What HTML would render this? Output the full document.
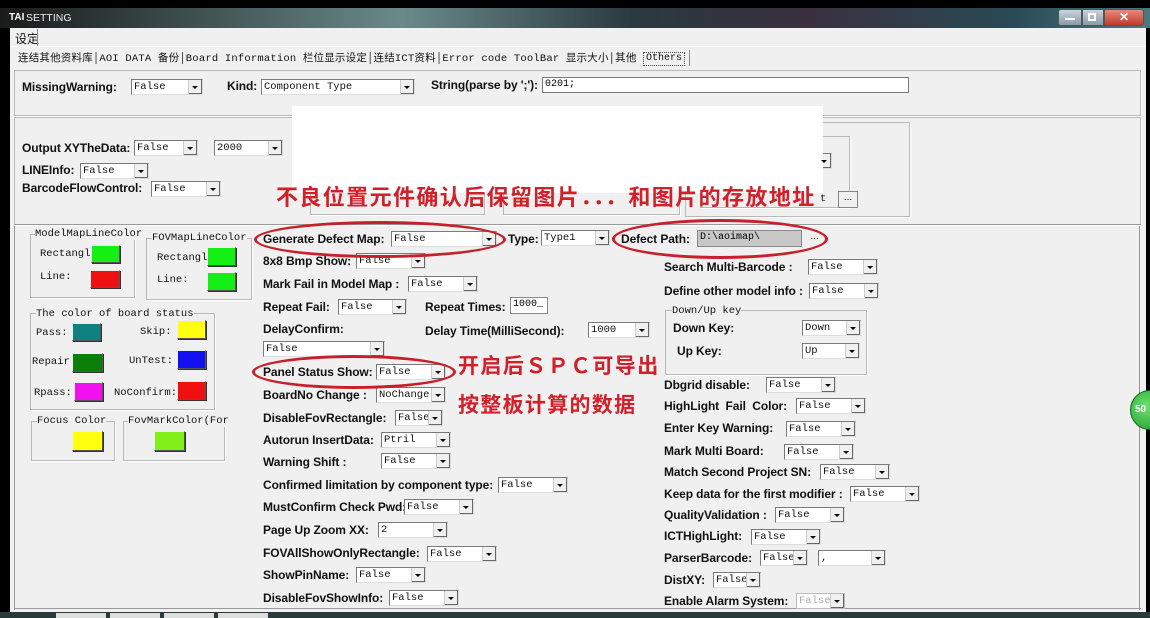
<!DOCTYPE html>
<html><head><meta charset="utf-8"><style>
*{margin:0;padding:0;box-sizing:border-box}
body{width:1150px;height:618px;overflow:hidden;background:#000;position:relative;font-family:"Liberation Sans","Noto Sans CJK SC",sans-serif}
.a{position:absolute}
.win{left:10px;top:28px;width:1136px;height:584px;background:#f0f0f0}
.l{position:absolute;font-size:12px;font-weight:bold;color:#111;white-space:nowrap;line-height:14px;letter-spacing:-0.1px}
.s{position:absolute;height:16px;background:#fff;border:1px solid #7a7a7a;border-right-color:#ddd;border-bottom-color:#ddd;font-family:"Liberation Mono",monospace;font-size:10.5px;line-height:14px;padding-left:2px;color:#111;white-space:nowrap;overflow:hidden}
.s::after{content:"";position:absolute;right:0;top:0;width:13px;height:14px;background:#f0f0f0;border-left:1px solid #ccc;box-shadow:inset -1px -1px 0 #666}
.s::before{content:"";position:absolute;right:4px;top:6px;border-left:3px solid transparent;border-right:3px solid transparent;border-top:3px solid #000;z-index:2}
.g{position:absolute;border:1px solid #b8b8b8;box-shadow:1px 1px 0 #fff}
.gt{position:absolute;font-family:"Liberation Mono",monospace;font-size:10.5px;background:#f0f0f0;line-height:12px;white-space:nowrap;color:#111}
.m{position:absolute;font-family:"Liberation Mono",monospace;font-size:10.5px;white-space:nowrap;color:#111;line-height:12px}
.sw{position:absolute;border:1px solid #555;border-top-color:#eee;border-left-color:#eee;box-shadow:1px 1px 0 #333}
.red{position:absolute;color:#d0202a;font-weight:bold;font-family:"Liberation Sans","Noto Sans CJK SC",sans-serif;white-space:nowrap}
.ell{position:absolute;border:3px solid #c8202a;border-radius:50%}
</style></head><body>
<!-- title bar -->
<div class="a" style="left:0;top:8px;width:1150px;height:20px;background:linear-gradient(90deg,#1a1a1a 0%,#3a4a4a 15%,#6a8a8a 35%,#2a3a40 55%,#3a3040 70%,#2a4a55 88%,#4a7a80 100%)"></div>
<div class="a" style="left:9px;top:12px;font-size:10px;color:#fff;font-weight:bold">TAI</div>
<div class="a" style="left:26px;top:12px;font-size:10.5px;color:#eee">SETTING</div>
<div class="a" style="left:1058px;top:9px;width:24px;height:17px;background:linear-gradient(#c8d4e0,#8a9aaa);border:1px solid #555;border-radius:3px 0 0 3px"></div>
<div class="a" style="left:1065px;top:18px;width:10px;height:2px;background:#fff"></div>
<div class="a" style="left:1082px;top:9px;width:22px;height:17px;background:linear-gradient(#c8d4e0,#8a9aaa);border:1px solid #555"></div>
<div class="a" style="left:1088px;top:13px;width:8px;height:8px;border:2px solid #fff"></div>
<div class="a" style="left:1104px;top:9px;width:40px;height:17px;background:linear-gradient(#e88a7a,#c03a2a);border:1px solid #555;border-radius:0 3px 3px 0;color:#fff;font-size:12px;font-weight:bold;text-align:center;line-height:15px">✕</div>
<div class="a win"></div>
<!-- tabs -->
<div class="a" style="left:15px;top:30px;font-size:12px;color:#111">设定</div>
<div class="a" style="left:37px;top:29px;width:1px;height:17px;background:#888"></div>
<div class="a" style="left:10px;top:46px;width:1136px;height:1px;background:#fff"></div>
<div class="m" style="left:18px;top:53px;font-family:'Liberation Mono','Noto Sans CJK SC',monospace;font-size:10.5px;letter-spacing:0.2px">连结其他资料库│AOI DATA 备份│Board Information 栏位显示设定│连结ICT资料│Error code ToolBar 显示大小│其他</div>
<div class="m" style="left:643px;top:52px;font-size:10px;border:1px dotted #444;padding:0 2px">Others</div>
<div class="a" style="left:689px;top:50px;width:1px;height:16px;background:#888"></div>
<!-- panel 1 -->
<div class="g" style="left:14px;top:70px;width:1127px;height:46px"></div>
<div class="l" style="left:22px;top:80px">MissingWarning:</div>
<div class="s" style="left:131px;top:79px;width:72px">False</div>
<div class="l" style="left:227px;top:79px">Kind:</div>
<div class="s" style="left:261px;top:79px;width:154px">Component Type</div>
<div class="l" style="left:431px;top:78px">String(parse by ';'):</div>
<div class="a" style="left:542px;top:77px;width:367px;height:16px;background:#fff;border:1px solid #7a7a7a;font-family:'Liberation Mono',monospace;font-size:10px;padding-left:2px;line-height:14px">0201;</div>
<!-- panel 2 -->
<div class="g" style="left:14px;top:117px;width:1127px;height:107px;border-bottom:none"></div>
<div class="l" style="left:22px;top:141px">Output XYTheData:</div>
<div class="s" style="left:134px;top:140px;width:64px">False</div>
<div class="s" style="left:214px;top:140px;width:69px">2000</div>
<div class="l" style="left:22px;top:163px">LINEInfo:</div>
<div class="s" style="left:80px;top:163px;width:69px">False</div>
<div class="l" style="left:22px;top:181px">BarcodeFlowControl:</div>
<div class="s" style="left:151px;top:181px;width:70px">False</div>
<div class="g" style="left:685px;top:122px;width:225px;height:95px"></div>
<div class="g" style="left:700px;top:136px;width:150px;height:72px"></div>
<div class="g" style="left:310px;top:190px;width:175px;height:25px"></div>
<div class="g" style="left:503px;top:190px;width:177px;height:25px"></div>
<div class="s" style="left:790px;top:153px;width:42px"></div>
<div class="m" style="left:820px;top:193px">t</div>
<div class="a" style="left:838px;top:191px;width:20px;height:17px;border:1px solid #888;background:#f0f0f0;font-size:10px;text-align:center;line-height:12px">...</div>
<div class="a" style="left:292px;top:106px;width:531px;height:87px;background:#fff"></div>
<div class="red" style="left:276px;top:180px;font-size:22px;letter-spacing:1.4px">不良位置元件确认后保留图片．．．和图片的存放地址</div>
<!-- separator -->
<div class="a" style="left:14px;top:224px;width:1127px;height:2px;border-top:1px solid #999;border-bottom:1px solid #fff"></div>
<div class="a" style="left:14px;top:226px;width:2px;height:384px;border-left:1px solid #999"></div>
<div class="a" style="left:1139px;top:226px;width:2px;height:384px;border-left:1px solid #999"></div>
<div class="a" style="left:14px;top:608px;width:1127px;height:2px;border-top:1px solid #999"></div>
<!-- left group boxes -->
<div class="g" style="left:30px;top:234px;width:105px;height:64px"></div>
<div class="gt" style="left:35px;top:228px">ModelMapLineColor</div>
<div class="m" style="left:40px;top:248px">Rectangl</div>
<div class="sw" style="left:91px;top:245px;width:29px;height:18px;background:#14f014"></div>
<div class="m" style="left:40px;top:271px">Line:</div>
<div class="sw" style="left:90px;top:270px;width:30px;height:18px;background:#f01010"></div>
<div class="g" style="left:146px;top:238px;width:106px;height:62px"></div>
<div class="gt" style="left:152px;top:232px">FOVMapLineColor</div>
<div class="m" style="left:157px;top:252px">Rectangl</div>
<div class="sw" style="left:207px;top:247px;width:29px;height:19px;background:#14f014"></div>
<div class="m" style="left:157px;top:274px">Line:</div>
<div class="sw" style="left:207px;top:272px;width:29px;height:19px;background:#14f014"></div>
<div class="g" style="left:30px;top:313px;width:185px;height:97px"></div>
<div class="gt" style="left:36px;top:308px">The color of board status</div>
<div class="m" style="left:36px;top:327px">Pass:</div>
<div class="sw" style="left:72px;top:323px;width:29px;height:18px;background:#108080"></div>
<div class="m" style="left:140px;top:326px">Skip:</div>
<div class="sw" style="left:177px;top:320px;width:29px;height:19px;background:#ffff10"></div>
<div class="m" style="left:32px;top:356px">Repair:</div>
<div class="sw" style="left:72px;top:353px;width:31px;height:19px;background:#0a800a"></div>
<div class="m" style="left:129px;top:355px">UnTest:</div>
<div class="sw" style="left:177px;top:350px;width:29px;height:19px;background:#1010f0"></div>
<div class="m" style="left:34px;top:387px">Rpass:</div>
<div class="sw" style="left:74px;top:382px;width:29px;height:19px;background:#f010f0"></div>
<div class="m" style="left:114px;top:387px">NoConfirm:</div>
<div class="sw" style="left:177px;top:381px;width:29px;height:19px;background:#f01010"></div>
<div class="g" style="left:31px;top:421px;width:84px;height:40px"></div>
<div class="gt" style="left:37px;top:415px">Focus Color</div>
<div class="sw" style="left:72px;top:431px;width:31px;height:20px;background:#ffff10"></div>
<div class="g" style="left:123px;top:421px;width:102px;height:40px"></div>
<div class="gt" style="left:128px;top:415px">FovMarkColor(For</div>
<div class="sw" style="left:154px;top:431px;width:31px;height:20px;background:#80f018"></div>
<!-- middle column -->
<div class="l" style="left:263px;top:232px">Generate Defect Map:</div>
<div class="s" style="left:391px;top:231px;width:106px">False</div>
<div class="l" style="left:508px;top:232px">Type:</div>
<div class="s" style="left:541px;top:230px;width:69px">Type1</div>
<div class="l" style="left:621px;top:232px">Defect Path:</div>
<div class="a" style="left:697px;top:230px;width:105px;height:17px;background:#c8c8c8;border:1px solid #888;font-family:'Liberation Mono',monospace;font-size:10px;padding-left:2px;line-height:14px">D:\aoimap\</div>
<div class="a" style="left:806px;top:230px;width:17px;height:17px;font-size:10px;text-align:center;line-height:14px">...</div>
<div class="l" style="left:263px;top:254px">8x8 Bmp Show:</div>
<div class="s" style="left:356px;top:253px;width:70px">False</div>
<div class="l" style="left:263px;top:277px">Mark Fail in Model Map :</div>
<div class="s" style="left:408px;top:276px;width:70px">False</div>
<div class="l" style="left:263px;top:300px">Repeat Fail:</div>
<div class="s" style="left:338px;top:299px;width:69px">False</div>
<div class="l" style="left:425px;top:300px">Repeat Times:</div>
<div class="a" style="left:510px;top:297px;width:38px;height:17px;background:#fff;border:1px solid #888;font-family:'Liberation Mono',monospace;font-size:10px;padding-left:2px;line-height:14px">1000_</div>
<div class="l" style="left:263px;top:322px">DelayConfirm:</div>
<div class="l" style="left:425px;top:324px">Delay Time(MilliSecond):</div>
<div class="s" style="left:588px;top:322px;width:62px">1000</div>
<div class="s" style="left:263px;top:341px;width:122px">False</div>
<div class="l" style="left:263px;top:365px">Panel Status Show:</div>
<div class="s" style="left:376px;top:364px;width:70px">False</div>
<div class="l" style="left:263px;top:388px">BoardNo Change :</div>
<div class="s" style="left:376px;top:387px;width:70px">NoChange</div>
<div class="l" style="left:263px;top:411px">DisableFovRectangle:</div>
<div class="s" style="left:395px;top:410px;width:48px">False</div>
<div class="l" style="left:263px;top:433px">Autorun InsertData:</div>
<div class="s" style="left:381px;top:432px;width:70px">Ptril</div>
<div class="l" style="left:263px;top:455px">Warning Shift :</div>
<div class="s" style="left:381px;top:453px;width:70px">False</div>
<div class="l" style="left:263px;top:478px">Confirmed limitation by component type:</div>
<div class="s" style="left:498px;top:477px;width:70px">False</div>
<div class="l" style="left:263px;top:500px">MustConfirm Check Pwd:</div>
<div class="s" style="left:404px;top:499px;width:70px">False</div>
<div class="l" style="left:263px;top:523px">Page Up Zoom XX:</div>
<div class="s" style="left:378px;top:522px;width:70px">2</div>
<div class="l" style="left:263px;top:546px">FOVAllShowOnlyRectangle:</div>
<div class="s" style="left:427px;top:546px;width:70px">False</div>
<div class="l" style="left:263px;top:568px">ShowPinName:</div>
<div class="s" style="left:356px;top:567px;width:70px">False</div>
<div class="l" style="left:263px;top:591px">DisableFovShowInfo:</div>
<div class="s" style="left:389px;top:590px;width:70px">False</div>
<div class="red" style="left:458px;top:350px;font-size:21px;letter-spacing:1.4px">开启后ＳＰＣ可导出</div>
<div class="red" style="left:458px;top:389px;font-size:21px;letter-spacing:1.3px">按整板计算的数据</div>
<!-- right column -->
<div class="l" style="left:664px;top:260px">Search Multi-Barcode :</div>
<div class="s" style="left:808px;top:259px;width:70px">False</div>
<div class="l" style="left:664px;top:284px">Define other model info :</div>
<div class="s" style="left:809px;top:283px;width:70px">False</div>
<div class="g" style="left:665px;top:310px;width:202px;height:65px"></div>
<div class="gt" style="left:672px;top:305px">Down/Up key</div>
<div class="l" style="left:673px;top:321px">Down Key:</div>
<div class="s" style="left:802px;top:320px;width:59px">Down</div>
<div class="l" style="left:677px;top:344px">Up Key:</div>
<div class="s" style="left:802px;top:343px;width:58px">Up</div>
<div class="l" style="left:664px;top:378px">Dbgrid disable:</div>
<div class="s" style="left:766px;top:377px;width:70px">False</div>
<div class="l" style="left:664px;top:399px">HighLight&nbsp; Fail&nbsp; Color:</div>
<div class="s" style="left:796px;top:398px;width:70px">False</div>
<div class="l" style="left:664px;top:421px">Enter Key Warning:</div>
<div class="s" style="left:786px;top:421px;width:70px">False</div>
<div class="l" style="left:664px;top:444px">Mark Multi Board:</div>
<div class="s" style="left:784px;top:444px;width:70px">False</div>
<div class="l" style="left:664px;top:465px">Match Second Project SN:</div>
<div class="s" style="left:820px;top:464px;width:70px">False</div>
<div class="l" style="left:664px;top:487px">Keep data for the first modifier :</div>
<div class="s" style="left:850px;top:486px;width:70px">False</div>
<div class="l" style="left:664px;top:508px">QualityValidation :</div>
<div class="s" style="left:775px;top:507px;width:70px">False</div>
<div class="l" style="left:664px;top:529px">ICTHighLight:</div>
<div class="s" style="left:751px;top:529px;width:70px">False</div>
<div class="l" style="left:664px;top:551px">ParserBarcode:</div>
<div class="s" style="left:760px;top:550px;width:48px">False</div>
<div class="s" style="left:818px;top:550px;width:68px">,</div>
<div class="l" style="left:664px;top:573px">DistXY:</div>
<div class="s" style="left:713px;top:572px;width:48px">False</div>
<div class="l" style="left:664px;top:594px">Enable Alarm System:</div>
<div class="s" style="left:796px;top:593px;width:49px;color:#aaa;border-color:#bbb">False</div>
<!-- ellipses -->
<div class="ell" style="left:254px;top:221px;width:252px;height:37px"></div>
<div class="ell" style="left:612px;top:219px;width:216px;height:40px"></div>
<div class="ell" style="left:252px;top:355px;width:204px;height:34px"></div>
<!-- green badge -->
<div class="a" style="left:1130px;top:390px;width:40px;height:40px;border-radius:50%;background:radial-gradient(circle at 40% 40%,#6de06d,#1a9a2a);border:1px solid #0a6a1a;color:#fff;font-size:10px;font-weight:bold;line-height:38px;padding-left:4px">50</div>
<!-- taskbar -->
<div class="a" style="left:0;top:612px;width:1150px;height:6px;background:#2a3a3a"></div>
<div class="a" style="left:56px;top:613px;width:50px;height:5px;background:#ddd"></div>
<div class="a" style="left:110px;top:613px;width:50px;height:5px;background:#ddd"></div>
<div class="a" style="left:164px;top:613px;width:50px;height:5px;background:#ddd"></div>
<div class="a" style="left:218px;top:613px;width:50px;height:5px;background:#ddd"></div>
</body></html>
